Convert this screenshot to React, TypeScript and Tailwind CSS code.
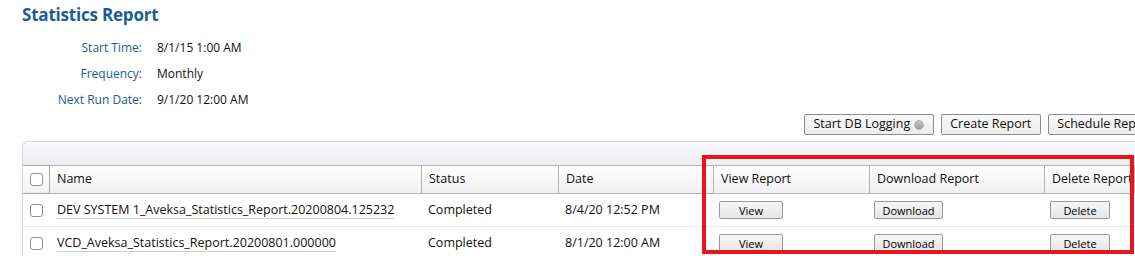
import React from 'react';

const reports = [
  { name: 'DEV SYSTEM 1_Aveksa_Statistics_Report.20200804.125232', status: 'Completed', date: '8/4/20 12:52 PM' },
  { name: 'VCD_Aveksa_Statistics_Report.20200801.000000', status: 'Completed', date: '8/1/20 12:00 AM' },
];

const Checkbox = () => (
  <div className="w-[13px] h-[13px] rounded-[3px] border border-[#8f8f8f] bg-white" />
);

const SmallButton = ({ label, width }: { label: string; width: string }) => (
  <button
    className={`${width} h-[18px] rounded-[2px] border border-[#9a9a9a] bg-gradient-to-b from-[#f6f6f6] to-[#e6e6e6] text-[11px] leading-none text-black`}
  >
    {label}
  </button>
);

const ToolButton = ({ children }: { children: React.ReactNode }) => (
  <button className="h-[21px] px-[8.5px] rounded-[2px] border border-[#8e8e8e] bg-gradient-to-b from-[#fafafa] to-[#ececec] text-[12.5px] leading-none text-[#111] flex items-center gap-1 whitespace-nowrap">
    {children}
  </button>
);

export default function App() {
  return (
    <div className="w-[1135px] h-[256px] overflow-hidden bg-white font-['Open_Sans',sans-serif] text-[#111]">
      {/* Title */}
      <h1 className="pl-[22px] pt-[4px] text-[17px] font-bold leading-[22px] text-[#1b5b96] tracking-[-0.2px]">
        Statistics Report
      </h1>

      {/* Schedule info */}
      <div className="mt-[13px] grid grid-cols-[142px_auto] gap-x-[15px] gap-y-[8px] text-[12px] leading-[18px]">
        <span className="text-right text-[#1d5a8e]">Start Time:</span>
        <span>8/1/15 1:00 AM</span>
        <span className="text-right text-[#1d5a8e]">Frequency:</span>
        <span>Monthly</span>
        <span className="text-right text-[#1d5a8e]">Next Run Date:</span>
        <span>9/1/20 12:00 AM</span>
      </div>

      {/* Toolbar */}
      <div className="mt-[5px] flex justify-start gap-[7px] pl-[804px]">
        <ToolButton>
          Start DB Logging
          <span className="w-[10px] h-[10px] rounded-full bg-gradient-to-b from-[#c8c8c8] to-[#9d9d9d] border border-[#b0b0b0]" />
        </ToolButton>
        <ToolButton>Create Report</ToolButton>
        <ToolButton>Schedule Report</ToolButton>
      </div>

      {/* Table panel */}
      <div className="relative mt-[6px] ml-[22px]">
        <div className="h-[24px] rounded-tl-[6px] border-t border-l border-[#d6d6dc] bg-gradient-to-b from-[#fbfbfd] to-[#ededf2]" />
        <div className="grid grid-cols-[27px_372px_137px_155px_156px_175px_1fr] border-l border-[#d6d6dc] text-[12.5px]">
          {/* Header */}
          <div className="h-[29px] flex items-center justify-center border-y border-r border-[#a9a9a9] bg-gradient-to-b from-[#ffffff] to-[#f1f1f1]">
            <Checkbox />
          </div>
          {['Name', 'Status', 'Date', 'View Report', 'Download Report', 'Delete Report'].map((h) => (
            <div
              key={h}
              className="h-[29px] flex items-center pl-[7px] border-y border-r border-[#b4b4b4] bg-gradient-to-b from-[#ffffff] to-[#f1f1f1] whitespace-nowrap overflow-hidden"
            >
              {h}
            </div>
          ))}

          {/* Rows */}
          {reports.map((r) => (
            <React.Fragment key={r.name}>
              <div className="h-[33px] flex items-center justify-center border-b border-[#e6e6e6]">
                <Checkbox />
              </div>
              <div className="h-[33px] flex items-center pl-[7px] border-b border-[#e6e6e6] whitespace-nowrap">
                <span className="border-b border-[#cfcfcf] leading-[16px]">{r.name}</span>
              </div>
              <div className="h-[33px] flex items-center pl-[6px] border-b border-[#e6e6e6]">{r.status}</div>
              <div className="h-[33px] flex items-center pl-[6px] border-b border-[#e6e6e6] whitespace-nowrap">{r.date}</div>
              <div className="h-[33px] flex items-center pl-[5px] border-b border-[#e6e6e6]">
                <SmallButton label="View" width="w-[64px]" />
              </div>
              <div className="h-[33px] flex items-center pl-[4px] border-b border-[#e6e6e6]">
                <SmallButton label="Download" width="w-[69px]" />
              </div>
              <div className="h-[33px] flex items-center pl-[5px] border-b border-[#e6e6e6]">
                <SmallButton label="Delete" width="w-[60px]" />
              </div>
            </React.Fragment>
          ))}
        </div>

        {/* Red highlight box */}
        <div className="absolute left-[680px] top-[14px] w-[432px] h-[99px] border-[4px] border-[#e8141e] pointer-events-none" />
      </div>
    </div>
  );
}
